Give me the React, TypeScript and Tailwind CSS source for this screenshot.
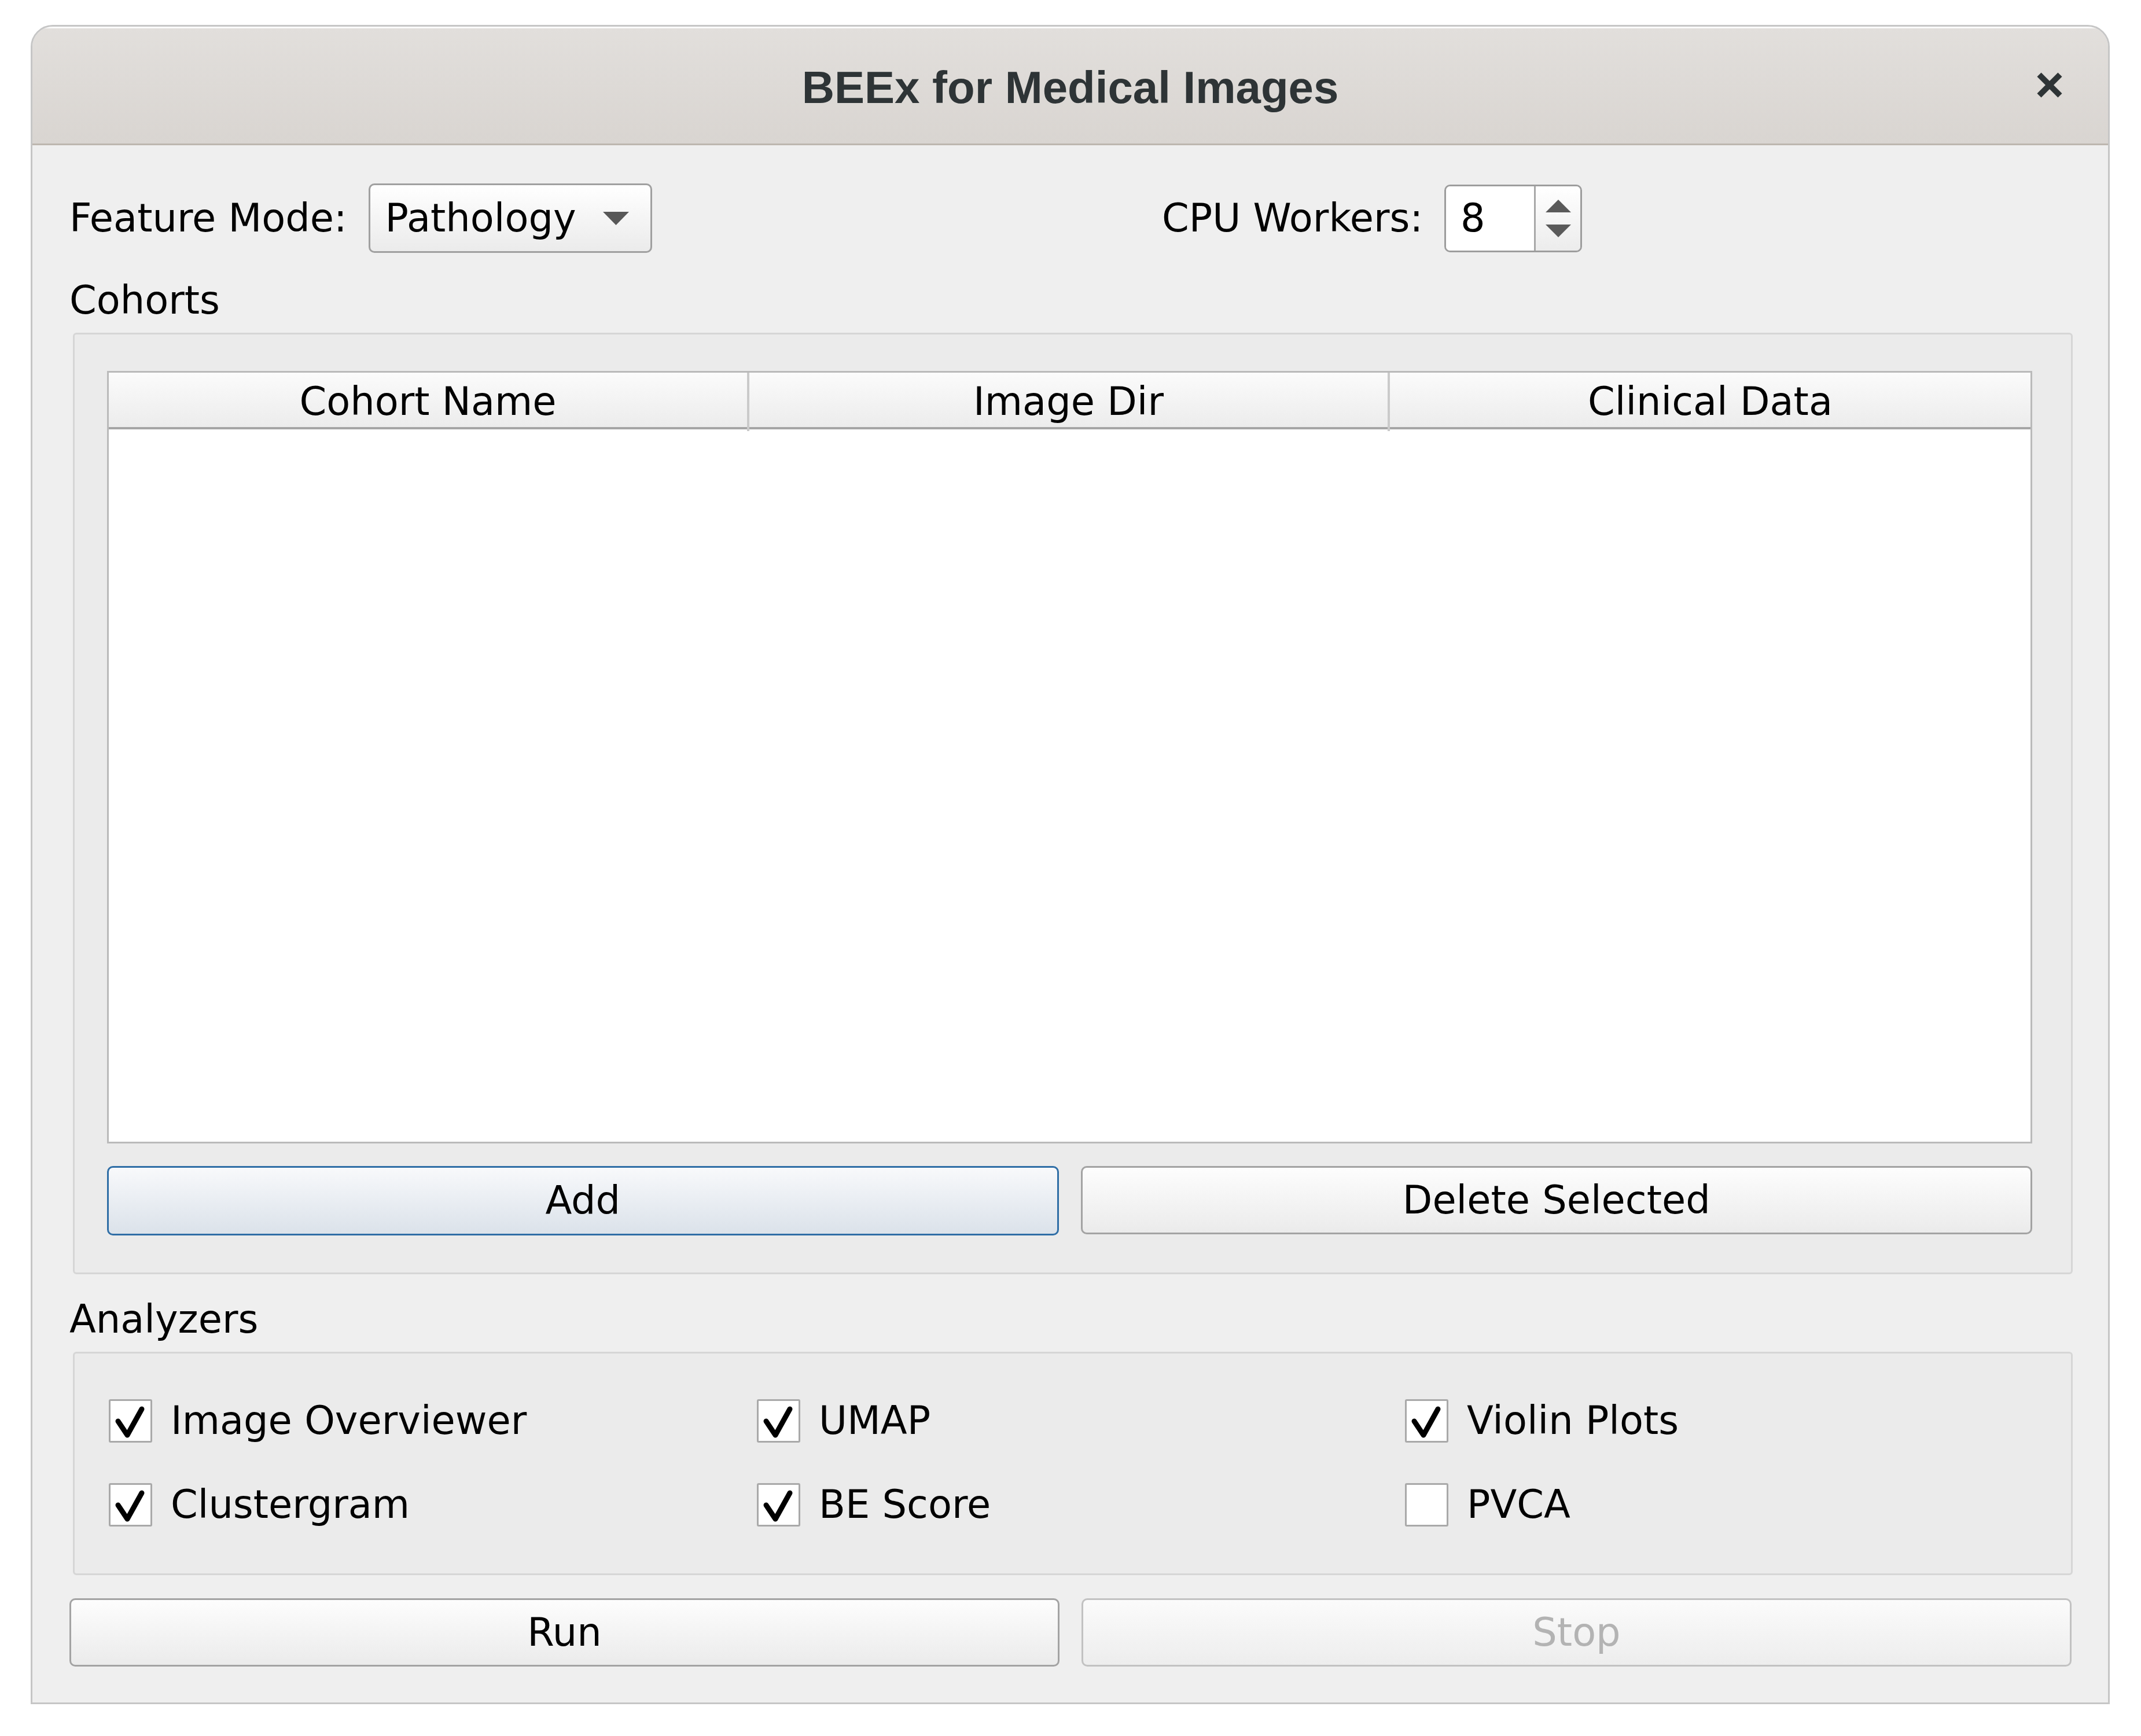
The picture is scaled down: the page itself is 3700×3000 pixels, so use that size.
import React from "react";

const CheckMark = () => (
  <svg width="69" height="69" viewBox="0 0 69 69" fill="none">
    <path
      d="M13 35 L29 59 L54 14"
      stroke="#000"
      strokeWidth="9"
      strokeLinejoin="round"
      strokeLinecap="round"
    />
  </svg>
);

const Check = ({ label, checked }: { label: string; checked: boolean }) => (
  <div className="flex items-center h-[75px] gap-[32px]">
    <div className="w-[75px] h-[75px] shrink-0 bg-white border-[3px] border-[#a9a9a9] rounded-[3px] flex items-center justify-center">
      {checked && <CheckMark />}
    </div>
    <span className="leading-[77px]">{label}</span>
  </div>
);

const PushButton = ({
  children,
  focused,
  disabled,
}: {
  children: React.ReactNode;
  focused?: boolean;
  disabled?: boolean;
}) => (
  <button
    className={
      focused
        ? "flex-1 h-[120px] rounded-[10px] border-[3px] border-[#2f6ea6] bg-gradient-to-b from-[#f8f9fb] to-[#dbe2ea] text-black"
        : disabled
        ? "flex-1 h-[118px] rounded-[10px] border-[3px] border-[#c2c2c2] bg-gradient-to-b from-[#fbfbfb] to-[#ededed] text-[#b3b3b3]"
        : "flex-1 h-[118px] rounded-[10px] border-[3px] border-[#a3a3a3] bg-gradient-to-b from-[#fdfdfd] to-[#ebebeb] text-black"
    }
  >
    {children}
  </button>
);

export default function App() {
  const analyzers = [
    { label: "Image Overviewer", checked: true },
    { label: "UMAP", checked: true },
    { label: "Violin Plots", checked: true },
    { label: "Clustergram", checked: true },
    { label: "BE Score", checked: true },
    { label: "PVCA", checked: false },
  ];

  return (
    <div
      className="w-[3700px] h-[3000px] bg-white pl-[53px] pt-[43px] text-[67px] text-black"
      style={{ fontFamily: '"DejaVu Sans", sans-serif' }}
    >
      <div className="w-[3593px] flex flex-col rounded-t-[38px] border-[3px] border-[#c6c6c6] bg-[#efefef] overflow-hidden">
        {/* Title bar */}
        <div className="h-[205px] shrink-0 grid grid-cols-[1fr_auto_1fr] items-center pt-[8px] bg-gradient-to-b from-[#e2dfdc] to-[#d9d5d1] border-b-[3px] border-[#bdb6af] shadow-[inset_0_3px_0_#fafafa]">
          <div />
          <span
            className="text-[78px] font-bold text-[#2e3436] leading-none"
            style={{ fontFamily: '"Liberation Sans", sans-serif' }}
          >
            BEEx for Medical Images
          </span>
          <div className="justify-self-end mr-[77px] -mt-[8px]">
            <svg width="48" height="46" viewBox="0 0 48 46" fill="none">
              <path
                d="M6 5 L42 41 M42 5 L6 41"
                stroke="#2e3436"
                strokeWidth="10"
              />
            </svg>
          </div>
        </div>

        {/* Body */}
        <div className="flex flex-col pl-[64px] pr-[63px] pt-[66px] pb-[62px]">
          {/* Top row */}
          <div className="flex items-center h-[120px]">
            <div className="flex items-center gap-[37px] w-[1888px]">
              <span>Feature Mode:</span>
              <div className="w-[490px] h-[120px] flex items-center rounded-[10px] border-[3px] border-[#a0a0a0] bg-gradient-to-b from-[#ffffff] to-[#ebebeb] pl-[26px] pr-[37px]">
                <span>Pathology</span>
                <svg
                  className="ml-auto"
                  width="45"
                  height="23"
                  viewBox="0 0 45 23"
                >
                  <path d="M0 0 L45 0 L22.5 23 Z" fill="#585858" />
                </svg>
              </div>
            </div>
            <span>CPU Workers:</span>
            <div className="ml-[37px] w-[238px] h-[117px] flex rounded-[10px] border-[3px] border-[#9d9d9d] overflow-hidden">
              <div className="w-[152px] bg-white flex items-center pl-[25px]">8</div>
              <div className="flex-1 border-l-[3px] border-[#a8a8a8] bg-gradient-to-b from-[#ffffff] to-[#ececec] flex flex-col items-center justify-center gap-[21px]">
                <svg width="44" height="22" viewBox="0 0 44 22">
                  <path d="M0 22 L44 22 L22 0 Z" fill="#5a5a5a" />
                </svg>
                <svg width="44" height="22" viewBox="0 0 44 22">
                  <path d="M0 0 L44 0 L22 22 Z" fill="#5a5a5a" />
                </svg>
              </div>
            </div>
          </div>

          {/* Cohorts */}
          <div className="mt-[44px] mb-[17px] h-[77px] leading-[77px]">Cohorts</div>
          <div className="ml-[6px] -mr-[2px] rounded-[6px] border-[3px] border-[#d6d6d6] bg-[#ebebeb] pl-[56px] pr-[67px] pt-[63px] pb-[64px]">
            <div className="h-[1335px] flex flex-col border-[3px] border-[#bababa] bg-white">
              <div className="h-[98px] shrink-0 grid grid-cols-3 border-b-[4px] border-[#a5a5a5] bg-gradient-to-b from-[#fbfbfb] to-[#ececec]">
                <div className="flex items-center justify-center border-r-[4px] border-[#cacaca]">Cohort Name</div>
                <div className="flex items-center justify-center border-r-[4px] border-[#cacaca]">Image Dir</div>
                <div className="flex items-center justify-center">Clinical Data</div>
              </div>
              <div className="flex-1" />
            </div>
            <div className="mt-[39px] flex gap-[38px]">
              <PushButton focused>Add</PushButton>
              <PushButton>Delete Selected</PushButton>
            </div>
          </div>

          {/* Analyzers */}
          <div className="mt-[40px] mb-[17px] h-[77px] leading-[77px]">Analyzers</div>
          <div className="ml-[6px] -mr-[2px] rounded-[6px] border-[3px] border-[#d6d6d6] bg-[#ebebeb] pl-[59px] pr-[67px] pt-[79px] pb-[81px]">
            <div className="grid grid-cols-3 gap-x-[36px] gap-y-[70px]">
              {analyzers.map((a) => (
                <Check key={a.label} label={a.label} checked={a.checked} />
              ))}
            </div>
          </div>

          {/* Run / Stop */}
          <div className="mt-[40px] flex gap-[38px]">
            <PushButton>Run</PushButton>
            <PushButton disabled>Stop</PushButton>
          </div>
        </div>
      </div>
    </div>
  );
}
